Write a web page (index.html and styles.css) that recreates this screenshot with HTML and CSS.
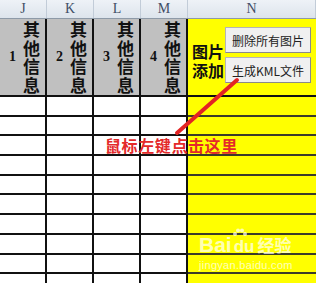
FILE: index.html
```
<!DOCTYPE html>
<html lang="zh-CN">
<head>
  <meta charset="UTF-8" />
  <meta name="viewport" content="width=device-width, initial-scale=1.0"/>
  <title>KML</title>
  <link rel="stylesheet" href="styles.css">
</head>
<body>
  <div class="wrap">
    <div class="colheads">
      <div class="ch">J</div>
      <div class="ch">K</div>
      <div class="ch">L</div>
      <div class="ch">M</div>
      <div class="ch">N</div>
    </div>

    <div class="sheet">
      <div class="cell head"><span class="num">1</span><span class="vtext">其他信息</span></div>
      <div class="cell head"><span class="num">2</span><span class="vtext">其他信息</span></div>
      <div class="cell head"><span class="num">3</span><span class="vtext">其他信息</span></div>
      <div class="cell head"><span class="num">4</span><span class="vtext">其他信息</span></div>
      <div class="cell head yellow">
        <div class="ntext">
          <div>图片</div>
          <div>添加</div>
        </div>
      </div>
    </div>

    <div class="sheet rows" id="rows"></div>

    <button class="btn btn-del">删除所有图片</button>
    <button class="btn btn-kml">生成KML文件</button>

    <svg class="arrow" width="316" height="283" viewBox="0 0 316 283">
      <line x1="237" y1="80" x2="177" y2="133" stroke="#e32424" stroke-width="4" stroke-linecap="round"/>
    </svg>
    <div class="note">鼠标左键点击这里</div>

    <div class="mark">
      <svg class="paw" width="16" height="13" viewBox="0 0 16 13">
        <circle cx="3" cy="6" r="2" fill="#fff"/>
        <circle cx="6" cy="2.5" r="2" fill="#fff"/>
        <circle cx="10" cy="2.5" r="2" fill="#fff"/>
        <circle cx="13" cy="6" r="2" fill="#fff"/>
      </svg>
      <div class="brand">Bai<span class="du">du</span><span class="jy">经验</span></div>
      <div class="url">jingyan.baidu.com</div>
    </div>
  </div>

  <script src="rows.js"></script>
</body>
</html>
```

FILE: rows.js
```
const rows = document.getElementById("rows");

for (let r = 0; r < 10; r++) {
  for (let c = 0; c < 5; c++) {
    const cell = document.createElement("div");
    cell.className = c === 4 ? "cell yellow" : "cell";
    rows.appendChild(cell);
  }
}
```

FILE: styles.css
```
body {
  margin: 0;
  background: #fff;
  font-family: "Noto Sans CJK SC", "Liberation Sans", sans-serif;
  overflow: hidden;
}
.wrap {
  position: relative;
  width: 316px;
  height: 283px;
  overflow: hidden;
}
.colheads {
  display: grid;
  grid-template-columns: 47px 47px 47px 47px 1fr;
  height: 19px;
  background: linear-gradient(#eef2f7, #dde4ec);
  border-bottom: 1px solid #8e9aa8;
  box-sizing: border-box;
}
.ch {
  border-right: 1px solid #c2ccd8;
  font-family: "Liberation Serif", serif;
  font-size: 14px;
  line-height: 18px;
  color: #3f4e66;
  text-align: center;
}
.sheet {
  display: grid;
  grid-template-columns: 47px 47px 47px 47px 1fr;
}
.rows {
  grid-auto-rows: 19.7px;
}
.cell {
  box-sizing: border-box;
  border-right: 2px solid #111;
  border-bottom: 2px solid #111;
}
.cell.yellow {
  background: #ffff00;
  border-right: none;
  border-bottom-color: #3b3b2a;
}
.head {
  height: 78px;
  background: #c0c0c0;
  display: flex;
  align-items: center;
  padding-left: 9px;
  gap: 7px;
}
.head.yellow {
  background: #ffff00;
  padding-left: 4px;
  padding-top: 7px;
  border-bottom: 2px solid #111;
}
.num {
  font-family: "Liberation Serif", serif;
  font-weight: bold;
  font-size: 14px;
  color: #111;
}
.vtext {
  width: 17px;
  font-size: 17px;
  line-height: 18.5px;
  font-weight: bold;
  color: #111;
  word-break: break-all;
}
.ntext {
  font-size: 16px;
  line-height: 19px;
  font-weight: bold;
  color: #111;
}
.btn {
  position: absolute;
  left: 225px;
  width: 86px;
  height: 26px;
  padding: 0;
  background: #f0f0f0;
  border: 1px solid #b5b5b5;
  border-right-color: #8a8a8a;
  border-bottom-color: #8a8a8a;
  font-family: "Noto Sans CJK SC", sans-serif;
  font-size: 12px;
  color: #222;
}
.btn-del {
  top: 27px;
}
.btn-kml {
  top: 57px;
}
.arrow {
  position: absolute;
  left: 0;
  top: 0;
}
.note {
  position: absolute;
  left: 105px;
  top: 136px;
  font-size: 16px;
  line-height: 18px;
  letter-spacing: 0.6px;
  font-weight: bold;
  color: #e42a2a;
}
.mark {
  position: absolute;
  left: 199px;
  top: 228px;
  color: #fff;
  opacity: 0.7;
}
.paw {
  position: absolute;
  left: 33px;
  top: 0;
}
.brand {
  margin-top: 6px;
  font-family: "Liberation Sans", sans-serif;
  font-size: 21px;
  line-height: 22px;
  font-weight: bold;
}
.du {
  font-size: 17px;
  margin-left: 2px;
}
.jy {
  font-family: "Noto Sans CJK SC", sans-serif;
  font-size: 17px;
  margin-left: 3px;
}
.url {
  font-family: "Liberation Sans", sans-serif;
  font-size: 11px;
  line-height: 14px;
  letter-spacing: 0.3px;
}
```
